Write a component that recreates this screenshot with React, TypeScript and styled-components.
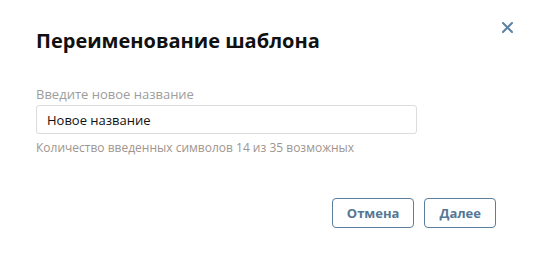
import React from 'react';
import styled, { createGlobalStyle } from 'styled-components';

const GlobalStyle = createGlobalStyle`
  html, body {
    margin: 0;
    padding: 0;
    background: #ffffff;
  }
  body {
    font-family: 'Open Sans', 'Noto Sans', sans-serif;
  }
`;

const Dialog = styled.div`
  position: relative;
  box-sizing: border-box;
  width: 533px;
  height: 264px;
  padding: 28px 37px 0 36px;
  display: flex;
  flex-direction: column;
  background: #ffffff;
`;

const Title = styled.h2`
  margin: 0;
  font-size: 20px;
  line-height: 26px;
  font-weight: 700;
  color: #111111;
`;

const CloseButton = styled.button`
  position: absolute;
  top: 20px;
  right: 19px;
  width: 14px;
  height: 14px;
  padding: 0;
  border: none;
  background: transparent;
  display: flex;
  align-items: center;
  justify-content: center;
  cursor: pointer;
`;

const Field = styled.div`
  display: flex;
  flex-direction: column;
  margin-top: 31px;
  width: 381px;
`;

const Label = styled.label`
  font-size: 13px;
  line-height: 18px;
  color: #9d9d9d;
  margin-bottom: 2px;
`;

const Input = styled.input`
  box-sizing: border-box;
  height: 29px;
  width: 100%;
  padding: 0 10px;
  border: 1px solid #dcdcdc;
  border-radius: 3px;
  font-family: inherit;
  font-size: 13px;
  color: #111111;
  outline: none;
`;

const Hint = styled.div`
  margin-top: 6px;
  font-size: 12px;
  line-height: 16px;
  color: #a0958e;
`;

const Footer = styled.div`
  display: flex;
  justify-content: flex-end;
  gap: 10px;
  margin-top: 42px;
`;

const Button = styled.button`
  box-sizing: border-box;
  height: 30px;
  padding: 0 14px;
  border: 1px solid #5a7e9c;
  border-radius: 4px;
  background: #ffffff;
  font-family: inherit;
  font-size: 13px;
  font-weight: 700;
  color: #557795;
  cursor: pointer;
`;

export default function App() {
  return (
    <>
      <GlobalStyle />
      <Dialog>
        <CloseButton aria-label="Закрыть">
          <svg width="11" height="11" viewBox="0 0 11 11">
            <path
              d="M1 1 L10 10 M10 1 L1 10"
              stroke="#5b82a3"
              strokeWidth="2"
              strokeLinecap="round"
            />
          </svg>
        </CloseButton>
        <Title>Переименование шаблона</Title>
        <Field>
          <Label>Введите новое название</Label>
          <Input defaultValue="Новое название" />
          <Hint>Количество введенных символов 14 из 35 возможных</Hint>
        </Field>
        <Footer>
          <Button>Отмена</Button>
          <Button>Далее</Button>
        </Footer>
      </Dialog>
    </>
  );
}
